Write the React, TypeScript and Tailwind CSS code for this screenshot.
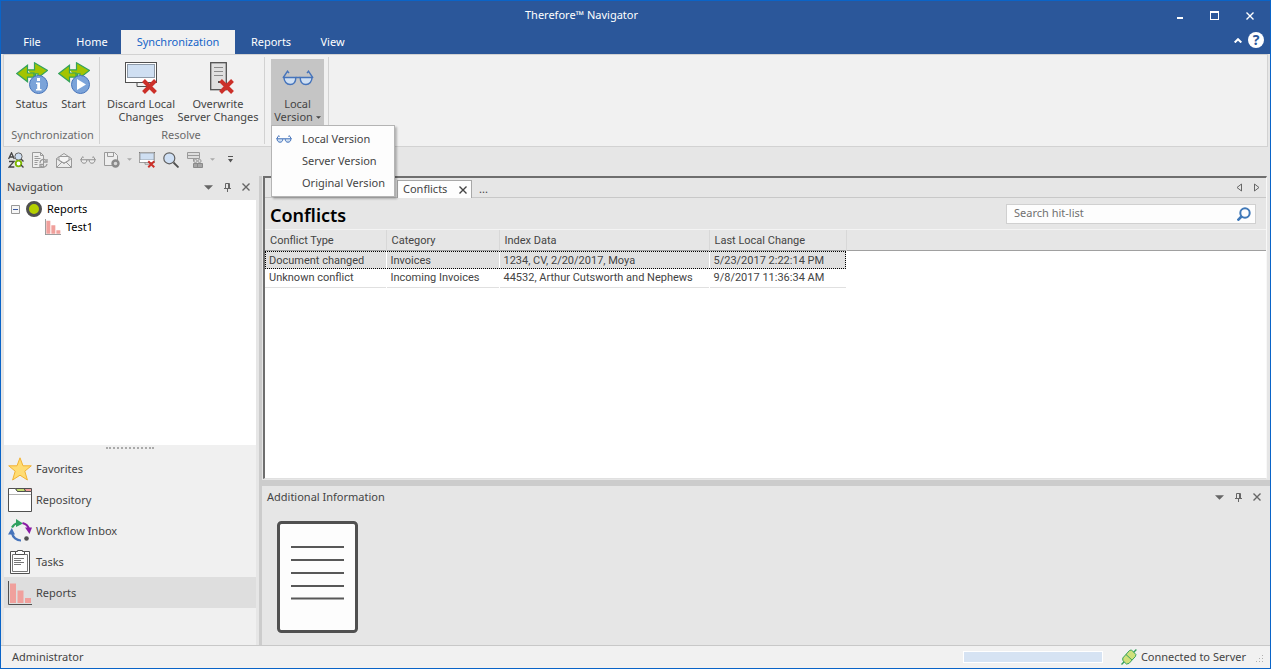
import type { ReactNode } from "react"

type IconProps = { className?: string }

function CrossMark({ x, y, s }: { x: number; y: number; s: number }) {
  return (
    <path
      d={`M${x} ${y}l${s} ${s}M${x + s} ${y}l${-s} ${s}`}
      stroke="#cc3029"
      strokeWidth={s / 3}
      fill="none"
    />
  )
}

function SyncArrows() {
  return (
    <path
      d="M.8 11.5 11.5 3.2v4.6h7V.8l13 7.7-9.5 7.3v-4h-2.5v3.4h-8v4.6Z M11.5 7.8v3.2h6.5v4.2"
      fill="#a4c400"
      stroke="#34a35c"
      strokeWidth="1.2"
    />
  )
}

function StatusIcon() {
  return (
    <svg viewBox="0 0 32 32" className="size-8">
      <SyncArrows />
      <circle cx="22.5" cy="22.5" r="9" fill="#7ba3d9" stroke="#4674bb" />
      <path d="M21 16h3v3h-3zM20 20.5h4V27h1.5v1.5H20V27h1.2v-5H20z" fill="#fff" />
    </svg>
  )
}

function StartIcon() {
  return (
    <svg viewBox="0 0 32 32" className="size-8">
      <SyncArrows />
      <circle cx="22.5" cy="22.5" r="9" fill="#7ba3d9" stroke="#4674bb" />
      <path d="M19 17v11l9-5.5z" fill="#fff" />
    </svg>
  )
}

function DiscardIcon({ className = "size-8" }: IconProps) {
  return (
    <svg viewBox="0 0 32 32" className={className}>
      <rect x=".5" y=".5" width="31" height="20" fill="#fff" stroke="#505050" />
      <rect x="2.5" y="2.5" width="27" height="13" fill="#cfdff2" stroke="#8e9aa8" />
      <path d="M12 21v3.5h10" fill="none" stroke="#505050" />
      <CrossMark x={18.5} y={18.5} s={12} />
    </svg>
  )
}

function OverwriteIcon() {
  return (
    <svg viewBox="0 0 32 32" className="size-8">
      <rect x="8.7" y=".7" width="15.6" height="27" fill="#e0e0e0" stroke="#505050" strokeWidth="1.3" />
      <path d="M12 5.5h9M12 9.5h9M12 13.5h9" stroke="#8a8a8a" />
      <rect x="16" y="19" width="2" height="2" fill="#505050" />
      <CrossMark x={18.5} y={18.5} s={12} />
    </svg>
  )
}

function GlassesIcon({ className, muted }: IconProps & { muted?: boolean }) {
  const small = className?.includes("w-4")
  return (
    <svg
      viewBox="0 0 32 16"
      className={className}
      fill="none"
      stroke={muted ? "#909090" : "#4674bb"}
      strokeWidth={small ? 2 : 1.4}
    >
      <path
        d="M2 7.5h11.8c0 4.5-2.3 7-5.7 7S2 11.5 2 7.5ZM18.2 7.5H30c0 4-2.5 7-6 7s-5.8-2.5-5.8-7Z"
        fill={muted ? "#eee" : "#cfdff2"}
      />
      <path d="M13.8 7.5h4.400M1 8 5.5 1.2l1.5 2M31 8 26.5 1.2l-1.5 2" />
    </svg>
  )
}

function SortFindIcon() {
  return (
    <svg viewBox="0 0 16 16" className="size-4" fill="none">
      <path d="M.6 7 3.5.8 6.3 7M1.6 5h3.8M1 9.5h5L1 15h5.3" stroke="#444" strokeWidth="1.3" />
      <circle cx="10.5" cy="4.5" r="3.6" fill="#cfdff2" stroke="#666" />
      <circle cx="10.5" cy="11.5" r="2.8" fill="#fff" stroke="#7db700" strokeWidth="1.8" />
      <path d="m13 7 2.5 2.5M13 13l2.5 2.5" stroke="#444" strokeWidth="1.4" />
    </svg>
  )
}

function DocRefreshIcon() {
  return (
    <svg viewBox="0 0 16 16" className="size-4" fill="none" stroke="#9a9a9a">
      <path d="M.5.5h8l3 3v12H.5ZM8.500.5v3h3" fill="#eee" />
      <path d="M2.5 4.5h4M2.5 6.5h6M2.5 8.5h4M2.5 10.5h3M2.5 12.5h3" />
      <path d="M8 11a3.5 3.5 0 0 1 6-2.5M15 7v3h-3M15 12a3.5 3.5 0 0 1-6 2M8 15.5v-3h3" strokeWidth="1.3" />
    </svg>
  )
}

function MailIcon() {
  return (
    <svg viewBox="0 0 16 16" className="size-4" fill="#ececec" stroke="#9a9a9a">
      <path d="M.5 6.5 8 1.5l7.5 5v9H.5Z" />
      <path d="M3 8.5v-4h10v4L8 11Z" fill="#f5f5f5" />
      <path d="m.5 6.5 7.5 5 7.5-5M.5 15.5 6 10M15.5 15.5 10 10" fill="none" />
    </svg>
  )
}

function SaveIcon() {
  return (
    <svg viewBox="0 0 16 16" className="size-4" fill="none" stroke="#9a9a9a">
      <path d="M.5.5h10l3 3v10H.5Z" fill="#eee" />
      <path d="M3.5.5v4h6v-4" />
      <circle cx="11.5" cy="11.5" r="3" fill="#d8d8d8" stroke="#8a8a8a" strokeWidth="2.4" />
    </svg>
  )
}

function MagnifierIcon() {
  return (
    <svg viewBox="0 0 16 16" className="size-4">
      <circle cx="6.3" cy="6.3" r="5.5" fill="#cfe0f5" stroke="#606060" strokeWidth="1.2" />
      <path d="m10.5 10.5 5 5" stroke="#505050" strokeWidth="1.8" />
    </svg>
  )
}

function CaseIcon() {
  return (
    <svg viewBox="0 0 16 16" className="size-4" fill="#ddd" stroke="#9a9a9a">
      <path d="M.5.500h12v6H.5ZM.5 3.5h12M6.500 6.500v3" />
      <circle cx="8.5" cy="9" r="1.600" />
      <circle cx="12.5" cy="9" r="1.600" />
      <path d="M6.5 11.5h9v4h-9ZM10.500 11.500v4" fill="#a5a5a5" stroke="#8a8a8a" />
    </svg>
  )
}

function CaretDown({ className }: IconProps) {
  return (
    <svg viewBox="0 0 10 5" className={className} fill="currentColor">
      <path d="M0 0h10L5 5z" />
    </svg>
  )
}

function PinIcon() {
  return (
    <svg viewBox="0 0 7 9" className="h-[9px] w-[7px]" fill="none" stroke="#666">
      <path d="M1.5 5.5v-5h4v5M0 5.5h7M3.5 5.5V9M4.5.5v5" />
    </svg>
  )
}

function CloseIcon({ className = "size-2" }: IconProps) {
  return (
    <svg viewBox="0 0 8 8" className={className} fill="none" stroke="currentColor" strokeWidth="1.4">
      <path d="m.5.5 7 7M7.5.5l-7 7" />
    </svg>
  )
}

function ReportIcon({ className }: IconProps) {
  return (
    <svg viewBox="0 0 24 24" className={className}>
      <path d="M.5 0v23.5H24" fill="none" stroke="#505050" />
      <path d="M2 2.5h6V22H2zM9.5 9.5h6V22h-6zM17 17h6v5h-6z" fill="#f0a09c" />
    </svg>
  )
}

function StarIcon() {
  return (
    <svg viewBox="0 0 24 24" className="size-6">
      <path
        d="m12 .8 3 8h8.3l-6.5 5.4 2.6 8.8L12 18.2 4.6 23l2.6-8.8L.7 8.8H9Z"
        fill="#ffdc73"
        stroke="#f2b234"
      />
    </svg>
  )
}

function RepositoryIcon() {
  return (
    <svg viewBox="0 0 24 24" className="size-6">
      <path d="M.5.5h7l2 3h14v20H.5Z" fill="#fff" stroke="#505050" />
      <path d="M7.5.5h9l1 3H9.5Z" fill="#c5de73" stroke="#505050" />
      <path d="M16 .5h7.500v3H18Z" fill="#f0a09c" stroke="#505050" />
      <path d="M1 6.5h22" stroke="#b0b0b0" />
    </svg>
  )
}

function WorkflowIcon() {
  return (
    <svg viewBox="0 0 24 24" className="size-6" fill="none" strokeWidth="2.2">
      <path d="M4 8.500A9 9 0 0 1 10 4" stroke="#2fa060" />
      <path d="M8 0v8l7-3.5z" fill="#2fa060" />
      <path d="M14.5 4A9 9 0 0 1 21 10" stroke="#8a1ba5" />
      <path d="M17 8.5h7L21.5 15z" fill="#8a1ba5" />
      <path d="M13 21.500A9 9 0 0 1 4 14" stroke="#4674bb" />
      <path d="M0 15.5 3.8 9 7 15.5z" fill="#4674bb" />
      <circle cx="18.5" cy="19.5" r="2.3" fill="#505050" />
    </svg>
  )
}

function TasksIcon() {
  return (
    <svg viewBox="0 0 24 24" className="size-6" fill="#fff" stroke="#505050">
      <path d="M2.5 1.5h19v22h-19Z" />
      <path d="M4.5 4.5h15v17h-15Z" stroke="#777" />
      <path d="M9.5.5h5v1h2v3h-9v-3h2Z" />
      <path d="M6 8.5h10M6 10.5h7M6 12.5h10M6 14.5h7" stroke="#777" />
    </svg>
  )
}

function PlugIcon() {
  return (
    <svg viewBox="0 0 16 16" className="size-4" fill="#cfe07a" stroke="#34a05a">
      <path d="m.5 15.5 3-3M12.5 3.5l3-3" strokeWidth="1.4" />
      <path d="M1.800 9 8.500 1.500 10.500.900 15 5.500l-.500 2L8 14.500l-2.500.600L1.800 11.500Z" />
      <path d="m5 5.5 6 5.500" />
    </svg>
  )
}

function IconButton({ label, className, children }: { label: string; className?: string; children: ReactNode }) {
  return (
    <button type="button" aria-label={label} className={`flex items-center justify-center ${className ?? ""}`}>
      {children}
    </button>
  )
}

function PanelControls() {
  return (
    <div className="flex text-[#666]">
      <IconButton label="Options" className="w-[19px]">
        <CaretDown className="h-[5px] w-[9px]" />
      </IconButton>
      <IconButton label="Pin" className="w-[19px]">
        <PinIcon />
      </IconButton>
      <IconButton label="Close" className="w-[18px]">
        <CloseIcon />
      </IconButton>
    </div>
  )
}

const tabs = [
  { label: "File", width: "w-[62px]" },
  { label: "Home", width: "w-[58px]" },
  { label: "Synchronization", width: "w-[114px]" },
  { label: "Reports", width: "w-[72px]" },
  { label: "View", width: "w-[51px]" },
]

function TitleBar() {
  return (
    <header className="bg-[#2b579a] text-white">
      <div className="flex h-[29px] items-stretch pr-[3px]">
        <h1 className="flex flex-1 items-center justify-center">Therefore™ Navigator</h1>
        <IconButton label="Minimize" className="w-[35px]">
          <svg viewBox="0 0 6 6" className="size-[6px]"><path d="M0 4h6v2H0z" fill="#fff" /></svg>
        </IconButton>
        <IconButton label="Maximize" className="w-[35px]">
          <svg viewBox="0 0 9 9" className="size-[9px]"><path d="M0 0h9v9H0zM1 2v6h7V2z" fill="#fff" fillRule="evenodd" /></svg>
        </IconButton>
        <IconButton label="Close window" className="w-[35px]">
          <CloseIcon />
        </IconButton>
      </div>
      <div className="flex h-6">
        <nav className="flex flex-1">
          {tabs.map((tab) => (
            <button
              key={tab.label}
              type="button"
              className={`${tab.width} ${tab.label === "Synchronization" ? "bg-[#f1f1f1] text-[#1464c8]" : ""}`}
            >
              {tab.label}
            </button>
          ))}
        </nav>
        <div className="flex items-center gap-[6px] pr-[6px] pb-1">
          <IconButton label="Collapse ribbon">
            <svg viewBox="0 0 8 5" className="h-[5px] w-2"><path d="m.7 4.5 3.300-3.300 3.300 3.300" fill="none" stroke="#fff" strokeWidth="2" /></svg>
          </IconButton>
          <button type="button" className="size-4 rounded-full bg-white text-[14px] leading-4 font-bold text-[#2b579a]">?</button>
        </div>
      </div>
    </header>
  )
}

function RibbonButton({ icon, width, children }: { icon: ReactNode; width: string; children: ReactNode }) {
  return (
    <button type="button" className={`flex flex-col items-center gap-[3px] pt-[3px] leading-[13px] ${width}`}>
      {icon}
      <span className="whitespace-nowrap">{children}</span>
    </button>
  )
}

function RibbonGroup({ label, className, children }: { label?: string; className: string; children: ReactNode }) {
  return (
    <div className={`flex flex-col border-r border-[#d2d2d2] ${className}`}>
      <div className="flex h-[70px] justify-center pt-[2px]">{children}</div>
      {label && <div className="text-center leading-[16px] text-[#6a6a6a]">{label}</div>}
    </div>
  )
}

function VersionMenu() {
  return (
    <div
      role="menu"
      className="absolute top-full left-0 z-10 w-[124px] border border-[#b4b4b4] bg-[#fdfdfd] py-[2px] shadow-[2px_2px_2px_rgba(0,0,0,0.25)]"
    >
      {["Local Version", "Server Version", "Original Version"].map((item) => (
        <button key={item} type="button" role="menuitem" className="flex h-[22px] w-full items-center pl-1 text-left whitespace-nowrap">
          <span className="w-[26px]">
            {item === "Local Version" && <GlassesIcon className="h-2 w-4" />}
          </span>
          {item}
        </button>
      ))}
    </div>
  )
}

function Ribbon() {
  return (
    <section className="mx-[2px] flex h-[93px] border border-[#d2d2d2] bg-[#f1f1f1] py-[2px]">
      <RibbonGroup label="Synchronization" className="w-24 pl-[2px]">
        <RibbonButton icon={<StatusIcon />} width="w-[42px]">Status</RibbonButton>
        <RibbonButton icon={<StartIcon />} width="w-[42px]">Start</RibbonButton>
      </RibbonGroup>
      <RibbonGroup label="Resolve" className="w-[165px] pr-[2px]">
        <RibbonButton icon={<DiscardIcon />} width="w-[74px]">
          Discard Local<br />Changes
        </RibbonButton>
        <RibbonButton icon={<OverwriteIcon />} width="w-[80px]">
          Overwrite<br />Server Changes
        </RibbonButton>
      </RibbonGroup>
      <RibbonGroup className="w-16 pl-[2px]">
        <div className="relative h-[66px] bg-[#c5c5c5]">
          <RibbonButton
            width="w-[53px]"
            icon={<span className="flex h-8 items-center"><GlassesIcon className="h-4 w-8" /></span>}
          >
            Local<br />Version
            <CaretDown className="mb-[2px] ml-[3px] inline h-[3px] w-[5px]" />
          </RibbonButton>
          <VersionMenu />
        </div>
      </RibbonGroup>
    </section>
  )
}

function QuickToolbar() {
  const slot = "w-6"
  const arrow = <CaretDown className="h-[3px] w-[5px] text-[#aaa]" />
  return (
    <div className="flex h-[29px] items-center px-[3px] pb-1">
      <IconButton label="Find" className={slot}><SortFindIcon /></IconButton>
      <IconButton label="Refresh document" className={slot}><DocRefreshIcon /></IconButton>
      <IconButton label="Mail" className={slot}><MailIcon /></IconButton>
      <IconButton label="View" className={slot}><GlassesIcon muted className="h-2 w-4" /></IconButton>
      <IconButton label="Save" className={slot}><SaveIcon /></IconButton>
      <IconButton label="Save options" className="w-[11px]">{arrow}</IconButton>
      <IconButton label="Discard changes" className={slot}><DiscardIcon className="size-4" /></IconButton>
      <IconButton label="Search" className={slot}><MagnifierIcon /></IconButton>
      <IconButton label="Case" className={slot}><CaseIcon /></IconButton>
      <IconButton label="Case options" className="w-[11px]">{arrow}</IconButton>
      <IconButton label="Customize" className={slot}>
        <svg viewBox="0 0 5 7" className="h-[7px] w-[5px]" fill="#555"><path d="M0 0h5v1H0zM0 3h5L2.5 6.5z" /></svg>
      </IconButton>
    </div>
  )
}

const areas = [
  { label: "Favorites", icon: <StarIcon /> },
  { label: "Repository", icon: <RepositoryIcon /> },
  { label: "Workflow Inbox", icon: <WorkflowIcon /> },
  { label: "Tasks", icon: <TasksIcon /> },
  { label: "Reports", icon: <ReportIcon className="size-6" />, active: true },
]

function Navigation() {
  return (
    <aside className="flex w-[258px] shrink-0 flex-col pr-[3px] pl-[3px]">
      <div className="flex h-6 items-center justify-between pr-px pb-[2px] pl-[3px]">
        <h2>Navigation</h2>
        <PanelControls />
      </div>
      <ul className="flex-1 bg-white text-black">
        <li>
          <div className="flex h-[18px] items-center">
            <svg viewBox="0 0 9 9" className="mr-[6px] ml-[7px] size-[9px]">
              <path d="M.5.5h8v8h-8z" fill="#f6f6f6" stroke="#979797" />
              <path d="M2 4.5h5" stroke="#3c5aa0" />
            </svg>
            <svg viewBox="0 0 16 16" className="mr-[5px] size-4">
              <circle cx="8" cy="8" r="6.5" fill="#b5d000" stroke="#505050" strokeWidth="3" />
            </svg>
            Reports
          </div>
          <ul>
            <li className="flex h-[18px] items-center pl-[41px]">
              <ReportIcon className="mr-[5px] size-4" />
              Test1
            </li>
          </ul>
        </li>
      </ul>
      <div className="flex h-2 items-start justify-center bg-[#f0f0f0] pt-[2px]">
        <div className="w-12 border-t-2 border-dotted border-[#aaa]" />
      </div>
      <nav className="bg-[#f0f0f0] pb-[37px]">
        {areas.map((area) => (
          <button
            key={area.label}
            type="button"
            className={`flex h-[31px] w-full items-center gap-1 pl-1 ${area.active ? "bg-[#dedede]" : ""}`}
          >
            {area.icon}
            <span className="pt-[2px]">{area.label}</span>
          </button>
        ))}
      </nav>
    </aside>
  )
}

const columns = ["Conflict Type", "Category", "Index Data", "Last Local Change"]

const conflicts = [
  ["Document changed", "Invoices", "1234, CV, 2/20/2017, Moya", "5/23/2017 2:22:14 PM"],
  ["Unknown conflict", "Incoming Invoices", "44532, Arthur Cutsworth and Nephews", "9/8/2017 11:36:34 AM"],
]

function ConflictTable() {
  return (
    <div className="flex-1 bg-[linear-gradient(#e6e6e6_20px,#a0a0a0_20px,#a0a0a0_21px,#fff_21px)]">
      <table className="w-[581px] table-fixed border-collapse text-left font-['Roboto',sans-serif] text-[11px] leading-[16px]">
        <colgroup>
          <col className="w-[121px]" />
          <col className="w-[113px]" />
          <col className="w-[210px]" />
          <col className="w-[137px]" />
        </colgroup>
        <thead>
          <tr className="h-[21px]">
            {columns.map((column) => (
              <th key={column} className="border-r border-[#d8d8d8] p-0 pt-px pl-[5px] font-normal">{column}</th>
            ))}
          </tr>
        </thead>
        <tbody>
          {conflicts.map((row, i) => (
            <tr
              key={row[0]}
              className={i === 0 ? "h-[18px] bg-[#e0e0e0] outline-1 -outline-offset-1 outline-black outline-dotted" : "h-[18px] border-b border-[#e0e0e0]"}
            >
              {row.map((cell) => (
                <td key={cell} className="border-r border-white p-0 pt-px pl-1 whitespace-nowrap">{cell}</td>
              ))}
            </tr>
          ))}
        </tbody>
      </table>
    </div>
  )
}

function ConflictsPane() {
  return (
    <section className="mr-[3px] flex flex-1 flex-col border-t-2 border-r border-b border-l-2 border-t-[#6e6e6e] border-r-[#f8f8f8] border-b-[#e0e0e0] border-l-[#6e6e6e]">
      <div className="flex h-5 items-end border-b border-[#c8c8c8] pl-[132px]">
        <div className="-mb-px flex h-[18px] w-[75px] items-center justify-between border border-b-0 border-[#a8a8a8] bg-[#fdfdfd] pr-1 pl-[5px]">
          Conflicts
          <IconButton label="Close tab"><CloseIcon /></IconButton>
        </div>
        <button type="button" className="ml-[7px] leading-[16px]">...</button>
        <div className="ml-auto flex gap-3 self-center pr-[6px]">
          <IconButton label="Previous tab">
            <svg viewBox="0 0 6 9" className="h-[9px] w-[6px]"><path d="M5.5 1v7L1 4.5z" fill="none" stroke="#666" /></svg>
          </IconButton>
          <IconButton label="Next tab">
            <svg viewBox="0 0 6 9" className="h-[9px] w-[6px]"><path d="M.5 1v7L5 4.5z" fill="none" stroke="#666" /></svg>
          </IconButton>
        </div>
      </div>
      <div className="flex h-8 items-center justify-between border-b border-[#f4f4f4] pr-[10px] pl-[5px]">
        <h2 className="pt-[2px] text-[18px] leading-6 font-semibold text-black">Conflicts</h2>
        <div className="flex h-5 w-[250px] items-center border border-[#d0d0d0] bg-[#fdfdfd] pr-1 pl-[7px]">
          <input aria-label="Search hit-list" placeholder="Search hit-list" className="min-w-0 flex-1 outline-none placeholder:text-[#707070]" />
          <IconButton label="Search">
            <svg viewBox="0 0 14 14" className="size-[14px]" fill="none" stroke="#3f78b8">
              <circle cx="8" cy="6" r="4.7" strokeWidth="2" />
              <path d="m4.5 9.5-4 4" strokeWidth="2.6" />
            </svg>
          </IconButton>
        </div>
      </div>
      <ConflictTable />
    </section>
  )
}

function DocumentPreview() {
  return (
    <svg viewBox="0 0 81 112" className="ml-[15px] h-[112px] w-[81px]">
      <rect x="1.5" y="1.5" width="78" height="109" rx="3" fill="#fdfdfd" stroke="#505050" strokeWidth="3" />
      <path d="M14 26h53M14 39h53M14 52h53M14 65h53M14 77.500h53" stroke="#585858" strokeWidth="2" />
    </svg>
  )
}

function AdditionalInformation() {
  return (
    <section className="h-[165px] border-t-6 border-[#ccc]">
      <div className="flex h-[22px] items-center justify-between pr-1 pl-[5px]">
        <h2>Additional Information</h2>
        <PanelControls />
      </div>
      <div className="pt-[13px]">
        <DocumentPreview />
      </div>
    </section>
  )
}

function StatusBar() {
  return (
    <footer className="flex h-[23px] items-center border-t border-[#c8c8c8] bg-[#f1f1f1] pr-[6px] pl-[11px]">
      <span className="flex-1">Administrator</span>
      <div className="h-3 w-[140px] border border-white bg-[#d6e3f3]" />
      <div className="ml-[18px] flex w-[125px] items-center gap-1 whitespace-nowrap">
        <PlugIcon />
        Connected to Server
      </div>
      <svg viewBox="0 0 8 8" className="mt-1 ml-[10px] size-2" fill="#b0b0b0">
        <path d="M6 0h1v1H6zM3 3h1v1H3zM6 3h1v1H6zM0 6h1v1H0zM3 6h1v1H3zM6 6h1v1H6z" />
      </svg>
    </footer>
  )
}

export default function App() {
  return (
    <div className="flex min-h-screen bg-white pr-px pb-px">
      <main className="flex flex-1 flex-col border border-[#0a64c8] bg-[#e6e6e6] font-['Noto_Sans','Open_Sans',sans-serif] text-[11px] text-[#444]">
        <TitleBar />
        <Ribbon />
        <QuickToolbar />
        <div className="flex flex-1">
          <Navigation />
          <div className="flex min-w-0 flex-1 flex-col border-l-3 border-[#ccc]">
            <div className="flex flex-1 pb-px pl-px">
              <ConflictsPane />
            </div>
            <AdditionalInformation />
          </div>
        </div>
        <StatusBar />
      </main>
    </div>
  )
}
